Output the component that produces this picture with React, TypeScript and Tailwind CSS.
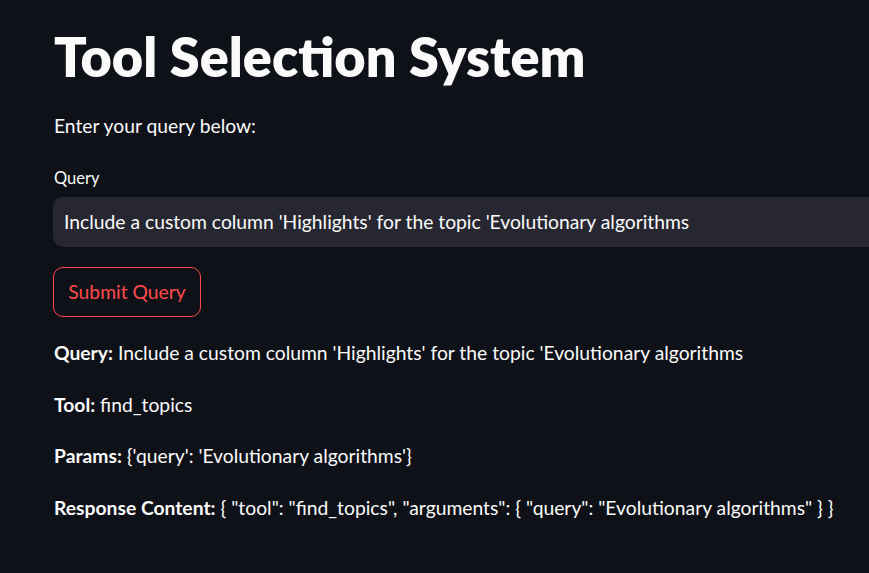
const results = [
  { label: "Query:", value: "Include a custom column 'Highlights' for the topic 'Evolutionary algorithms" },
  { label: "Tool:", value: "find_topics" },
  { label: "Params:", value: "{'query': 'Evolutionary algorithms'}" },
  {
    label: "Response Content:",
    value: '{ "tool": "find_topics", "arguments": { "query": "Evolutionary algorithms" } }',
  },
];

export default function App() {
  return (
    <div className="h-[573px] w-[869px] overflow-hidden bg-[#0e1117] font-['Lato',sans-serif] text-[#fafafa]">
      <div className="w-[900px] pl-[54px] pt-[25px]">
        <h1 className="text-[54px] leading-[1.2] font-extrabold">Tool Selection System</h1>

        <p className="mt-[21px] text-[19.3px] leading-[30px]">Enter your query below:</p>

        <label className="mt-[25px] block text-[16.5px] leading-[24px]">Query</label>
        <div className="mt-[7px] ml-[-1px] rounded-[10px] bg-[#262730] px-[11px] py-[10px] text-[19.3px] leading-[30px]">
          Include a custom column 'Highlights' for the topic 'Evolutionary algorithms
        </div>

        <button className="mt-[20px] ml-[-1px] block w-[148px] rounded-[10px] border border-[#ff4b4b] py-[9px] text-center text-[19.3px] leading-[30px] text-[#ff4b4b]">
          Submit Query
        </button>

        <div className="mt-[21.5px] flex flex-col gap-[21.5px]">
          {results.map((r) => (
            <p key={r.label} className="text-[19.3px] leading-[30px]">
              <span className="font-bold">{r.label}</span> {r.value}
            </p>
          ))}
        </div>
      </div>
    </div>
  );
}
